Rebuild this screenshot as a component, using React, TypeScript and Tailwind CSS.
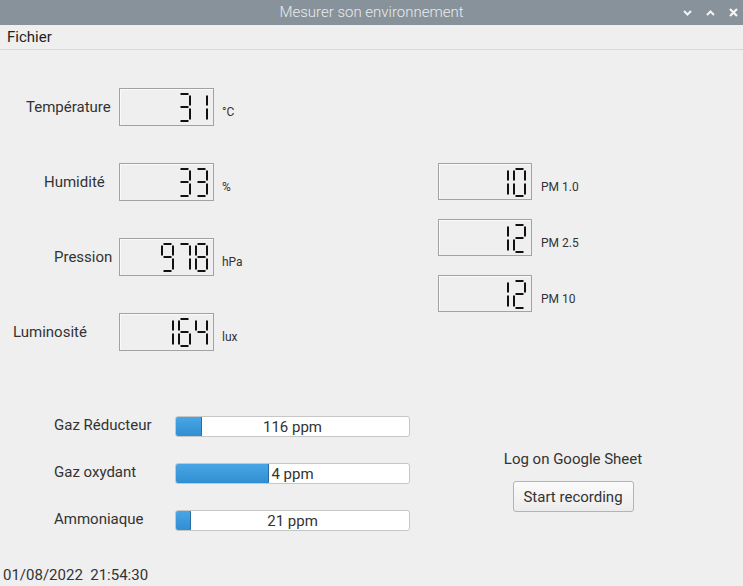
import React from "react";

const SEGS: Record<string, [number, number, number, number]> = {
  a: [2.5, 1, 10.5, 1],
  b: [12, 2.5, 12, 12.5],
  c: [12, 15.5, 12, 26.5],
  d: [2.5, 28, 10.5, 28],
  e: [1, 15.5, 1, 26.5],
  f: [1, 2.5, 1, 12.5],
  g: [2.5, 14, 10.5, 14],
};

const DIGIT_SEGS: Record<string, string> = {
  "0": "abcdef",
  "1": "bc",
  "2": "abged",
  "3": "abgcd",
  "4": "fgbc",
  "5": "afgcd",
  "6": "afgecd",
  "7": "abc",
  "8": "abcdefg",
  "9": "abcdfg",
  " ": "",
};

function Digit({ ch }: { ch: string }) {
  const segs = DIGIT_SEGS[ch] ?? "";
  return (
    <svg width="13" height="29" viewBox="0 0 13 29" className="shrink-0">
      {segs.split("").map((s) => {
        const [x1, y1, x2, y2] = SEGS[s];
        return (
          <line
            key={s}
            x1={x1}
            y1={y1}
            x2={x2}
            y2={y2}
            stroke="#111"
            strokeWidth={2}
            strokeLinecap="butt"
          />
        );
      })}
    </svg>
  );
}

function LCD({ value, h }: { value: string; h: "38" | "37" }) {
  const padded = value.padStart(3, " ");
  return (
    <div
      className={
        "flex items-start justify-end gap-[4px] pt-[4px] pr-[5px] border border-[#a2a2a2] shadow-[inset_1px_1px_0_#fafafa] shrink-0 " +
        (h === "38" ? "w-[95px] h-[38px]" : "w-[94px] h-[37px]")
      }
    >
      {padded.split("").map((c, i) => (
        <Digit key={i} ch={c} />
      ))}
    </div>
  );
}

const sensors = [
  { label: "Température", value: "31", unit: "°C", pl: "pl-[26px]" },
  { label: "Humidité", value: "33", unit: "%", pl: "pl-[44px]" },
  { label: "Pression", value: "978", unit: "hPa", pl: "pl-[54px]" },
  { label: "Luminosité", value: "164", unit: "lux", pl: "pl-[13px]" },
];

const pms = [
  { value: "10", label: "PM 1.0" },
  { value: "12", label: "PM 2.5" },
  { value: "12", label: "PM 10" },
];

const gauges = [
  { label: "Gaz Réducteur", text: "116 ppm", fill: 27 },
  { label: "Gaz oxydant", text: "4 ppm", fill: 94 },
  { label: "Ammoniaque", text: "21 ppm", fill: 16 },
];

export default function App() {
  return (
    <div
      className="w-[743px] h-[586px] bg-[#efefef] flex flex-col text-[#333] overflow-hidden"
      style={{ fontFamily: "Roboto, 'Liberation Sans', sans-serif" }}
    >
      {/* Title bar */}
      <div className="h-[25px] bg-[#87929a] flex items-center shrink-0">
        <div className="flex-1 text-center text-[15px] font-light text-[#e9ecef] leading-[25px] pl-[60px]">
          Mesurer son environnement
        </div>
        <div className="flex items-center gap-[14px] pr-[5px]">
          <svg width="9" height="6" viewBox="0 0 9 6">
            <path d="M1 1 L4.5 4.5 L8 1" stroke="#f5f5f5" strokeWidth="2" fill="none" />
          </svg>
          <svg width="9" height="6" viewBox="0 0 9 6">
            <path d="M1 5 L4.5 1.5 L8 5" stroke="#f5f5f5" strokeWidth="2" fill="none" />
          </svg>
          <svg width="9" height="9" viewBox="0 0 9 9">
            <path d="M1 1 L8 8 M8 1 L1 8" stroke="#f5f5f5" strokeWidth="2.2" fill="none" />
          </svg>
        </div>
      </div>

      {/* Menu bar */}
      <div className="h-[25px] border-b border-[#d8d8d8] flex items-center px-[7px] shrink-0">
        <span className="text-[15px] leading-[18px] text-[#222]">Fichier</span>
      </div>

      {/* Top section */}
      <div className="flex shrink-0">
        <div className="w-[438px] shrink-0 flex flex-col gap-[37px] pt-[38px]">
          {sensors.map((s) => (
            <div key={s.label} className="flex items-center h-[38px]">
              <div className={"w-[119px] shrink-0 text-[15px] leading-[18px] " + s.pl}>{s.label}</div>
              <LCD value={s.value} h="38" />
              <span className="ml-[8px] mt-[10px] text-[12px] leading-[14px]">{s.unit}</span>
            </div>
          ))}
        </div>
        <div className="flex flex-col gap-[19px] pt-[113px]">
          {pms.map((p) => (
            <div key={p.label} className="flex items-center h-[37px]">
              <LCD value={p.value} h="37" />
              <span className="ml-[9px] mt-[10px] text-[12px] leading-[14px]">{p.label}</span>
            </div>
          ))}
        </div>
      </div>

      {/* Bottom section */}
      <div className="flex mt-[52px] shrink-0">
        <div className="w-[498px] shrink-0 flex flex-col">
          {gauges.map((g) => (
            <div key={g.label} className="flex items-center h-[47px]">
              <div className="w-[175px] shrink-0 pl-[54px] pb-[3px] text-[15px] leading-[18px]">{g.label}</div>
              <div className="relative w-[235px] h-[21px] bg-white border border-[#c6c6c6] rounded-[3px] overflow-hidden">
                <div
                  className="absolute left-0 top-0 bottom-0 bg-gradient-to-b from-[#49a6e6] to-[#2f8fd2] border border-[#2a6c9f] rounded-[2px] -m-px"
                  style={{ width: g.fill }}
                />
                <div className="absolute inset-0 flex items-center justify-center text-[15px] leading-[18px] text-[#333]">
                  {g.text}
                </div>
              </div>
            </div>
          ))}
        </div>
        <div className="w-[148px] shrink-0 flex flex-col items-center pt-[47px] pl-[2px]">
          <div className="text-[15px] leading-[18px]">Log on Google Sheet</div>
          <button className="mt-[13px] w-[121px] h-[31px] rounded-[3px] border border-[#b3b3b3] bg-gradient-to-b from-[#fbfbfb] to-[#ececec] text-[15px] leading-[18px] text-[#333]">
            Start recording
          </button>
        </div>
      </div>

      {/* Footer */}
      <div className="mt-auto mb-[2px] h-[18px] pl-[3px] text-[15px] leading-[18px] whitespace-pre">
        01/08/2022  21:54:30
      </div>
    </div>
  );
}
